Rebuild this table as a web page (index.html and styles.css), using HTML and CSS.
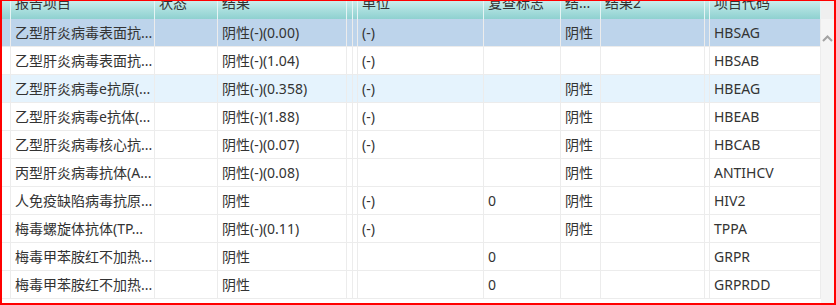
FILE: index.html
```html
<!DOCTYPE html>
<html lang="zh-CN">
<head>
<meta charset="utf-8">
<title>报告项目</title>
<link rel="stylesheet" href="styles.css">
</head>
<body>
<div class="frame">
  <div class="grid">
    <div class="row head">
      <div class="c"></div>
      <div class="c"><span class="ht">报告项目</span></div>
      <div class="c"><span class="ht">状态</span></div>
      <div class="c"><span class="ht">结果</span></div>
      <div class="c"></div>
      <div class="c"></div>
      <div class="c"><span class="ht">单位</span></div>
      <div class="c"><span class="ht">复查标志</span></div>
      <div class="c"><span class="ht">结...</span></div>
      <div class="c"><span class="ht">结果2</span></div>
      <div class="c"></div>
      <div class="c"><span class="ht">项目代码</span></div>
    </div>
    <div class="row sel">
      <div class="c"></div><div class="c">乙型肝炎病毒表面抗...</div><div class="c"></div><div class="c">阴性(-)(0.00)</div><div class="c"></div><div class="c"></div><div class="c">(-)</div><div class="c"></div><div class="c">阴性</div><div class="c"></div><div class="c"></div><div class="c">HBSAG</div>
    </div>
    <div class="row">
      <div class="c"></div><div class="c">乙型肝炎病毒表面抗...</div><div class="c"></div><div class="c">阴性(-)(1.04)</div><div class="c"></div><div class="c"></div><div class="c">(-)</div><div class="c"></div><div class="c"></div><div class="c"></div><div class="c"></div><div class="c">HBSAB</div>
    </div>
    <div class="row hover">
      <div class="c"></div><div class="c">乙型肝炎病毒e抗原(...</div><div class="c"></div><div class="c">阴性(-)(0.358)</div><div class="c"></div><div class="c"></div><div class="c">(-)</div><div class="c"></div><div class="c">阴性</div><div class="c"></div><div class="c"></div><div class="c">HBEAG</div>
    </div>
    <div class="row">
      <div class="c"></div><div class="c">乙型肝炎病毒e抗体(...</div><div class="c"></div><div class="c">阴性(-)(1.88)</div><div class="c"></div><div class="c"></div><div class="c">(-)</div><div class="c"></div><div class="c">阴性</div><div class="c"></div><div class="c"></div><div class="c">HBEAB</div>
    </div>
    <div class="row">
      <div class="c"></div><div class="c">乙型肝炎病毒核心抗...</div><div class="c"></div><div class="c">阴性(-)(0.07)</div><div class="c"></div><div class="c"></div><div class="c">(-)</div><div class="c"></div><div class="c">阴性</div><div class="c"></div><div class="c"></div><div class="c">HBCAB</div>
    </div>
    <div class="row">
      <div class="c"></div><div class="c">丙型肝炎病毒抗体(A...</div><div class="c"></div><div class="c">阴性(-)(0.08)</div><div class="c"></div><div class="c"></div><div class="c"></div><div class="c"></div><div class="c">阴性</div><div class="c"></div><div class="c"></div><div class="c">ANTIHCV</div>
    </div>
    <div class="row">
      <div class="c"></div><div class="c">人免疫缺陷病毒抗原...</div><div class="c"></div><div class="c">阴性</div><div class="c"></div><div class="c"></div><div class="c">(-)</div><div class="c">0</div><div class="c">阴性</div><div class="c"></div><div class="c"></div><div class="c">HIV2</div>
    </div>
    <div class="row">
      <div class="c"></div><div class="c">梅毒螺旋体抗体(TP...</div><div class="c"></div><div class="c">阴性(-)(0.11)</div><div class="c"></div><div class="c"></div><div class="c">(-)</div><div class="c"></div><div class="c">阴性</div><div class="c"></div><div class="c"></div><div class="c">TPPA</div>
    </div>
    <div class="row">
      <div class="c"></div><div class="c">梅毒甲苯胺红不加热...</div><div class="c"></div><div class="c">阴性</div><div class="c"></div><div class="c"></div><div class="c"></div><div class="c">0</div><div class="c"></div><div class="c"></div><div class="c"></div><div class="c">GRPR</div>
    </div>
    <div class="row">
      <div class="c"></div><div class="c">梅毒甲苯胺红不加热...</div><div class="c"></div><div class="c">阴性</div><div class="c"></div><div class="c"></div><div class="c"></div><div class="c">0</div><div class="c"></div><div class="c"></div><div class="c"></div><div class="c">GRPRDD</div>
    </div>
  </div>
  <div class="vscroll">
    <div class="vs-head"></div>
    <svg class="arrow" width="13" height="10" viewBox="0 0 13 10">
      <path d="M2 8 L6.5 3.5 L11 8" fill="none" stroke="#a3a3a3" stroke-width="2"/>
    </svg>
  </div>
</div>
</body>
</html>
```
FILE: styles.css
```css
html, body {
  margin: 0;
  padding: 0;
  background: #ffffff;
}

.frame {
  width: 836px;
  height: 305px;
  box-sizing: border-box;
  border: 2px solid #ff0000;
  border-top-width: 1px;
  display: flex;
  overflow: hidden;
  font-family: "Noto Sans", "Noto Sans CJK SC", sans-serif;
  font-size: 14px;
  color: #333333;
}

.grid {
  width: 819px;
  flex: none;
}

.row {
  display: grid;
  grid-template-columns: 9px 144px 63px 129px 6px 5px 126px 77px 40px 104px 5px 111px;
  height: 28px;
  box-sizing: border-box;
  border-bottom: 1px solid #ececec;
  background: #ffffff;
}

.row.sel {
  background: #bdd4eb;
}

.row.hover {
  background: #e5f3fd;
}

.c {
  box-sizing: border-box;
  border-right: 1px solid #ececec;
  padding-left: 4px;
  white-space: nowrap;
  overflow: hidden;
  line-height: 27px;
}

.c:first-child {
  padding-left: 0;
}

.row.head {
  height: 18px;
  border-bottom: none;
  background: linear-gradient(to bottom, #cbeceb 0%, #a9dedd 50%, #8fd1d0 100%);
}

.row.head .c {
  border-right: 1px solid #e6f4f4;
  line-height: 14px;
}

.ht {
  display: block;
  margin-top: -5px;
}

.vscroll {
  width: 13px;
  flex: none;
  background: #f5f5f5;
  display: flex;
  flex-direction: column;
}

.vs-head {
  height: 18px;
  background: #efefef;
}

.arrow {
  display: block;
  margin-top: 14px;
}
```
